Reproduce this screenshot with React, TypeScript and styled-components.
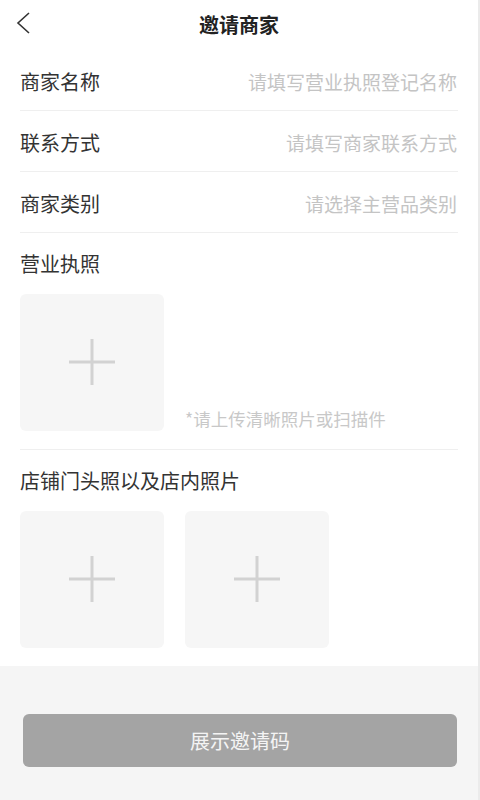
import React from 'react';
import styled, { createGlobalStyle } from 'styled-components';

const GlobalStyle = createGlobalStyle`
    html, body {
        margin: 0;
        padding: 0;
        background: #ffffff;
        font-family: "Noto Sans CJK SC", "Noto Sans", sans-serif;
    }
    * { box-sizing: border-box; }
    svg { display: block; }
`;

const Page = styled.div`
    width: 480px;
    height: 800px;
    display: flex;
    flex-direction: column;
    background: #ffffff;
    border-right: 2px solid #ebebeb;
    overflow: hidden;
`;

const Header = styled.div`
    height: 50px;
    display: flex;
    align-items: center;
    justify-content: center;
    position: relative;
`;

const BackButton = styled.button`
    position: absolute;
    left: 12px;
    top: 9px;
    width: 24px;
    height: 28px;
    padding: 0;
    border: none;
    background: transparent;
    display: flex;
    align-items: center;
    justify-content: center;
`;

const Title = styled.h1`
    margin: 0;
    font-size: 20px;
    font-weight: 700;
    color: #222;
    line-height: 1;
`;

const Form = styled.div`
    padding: 0 20px 0 20px;
`;

const Row = styled.div`
    height: 61px;
    display: flex;
    align-items: center;
    justify-content: space-between;
    border-bottom: 1px solid #efefef;
    padding-top: 3px;
`;

const Label = styled.span`
    font-size: 20px;
    color: #333;
    line-height: 22px;
`;

const Placeholder = styled.span`
    font-size: 19px;
    color: #c4c4c4;
    line-height: 22px;
    margin-right: 1px;
`;

const Section = styled.div<{ last?: boolean }>`
    padding: 20px 0 18px;
    border-bottom: ${p => (p.last ? 'none' : '1px solid #efefef')};
`;

const SectionLabel = styled(Label)`
    display: block;
    margin-bottom: 19px;
`;

const Uploads = styled.div`
    display: flex;
    align-items: flex-end;
    gap: 21px;
`;

const UploadBox = styled.div`
    width: 144px;
    height: 137px;
    border-radius: 6px;
    background: #f6f6f6;
    display: flex;
    align-items: center;
    justify-content: center;
    padding-bottom: 2px;
`;

const Hint = styled.span`
    font-size: 17.5px;
    color: #c8c8c8;
    line-height: 20px;
    margin-bottom: 2px;
`;

const Footer = styled.div`
    flex: 1;
    background: #f5f5f5;
    padding: 48px 21px 0 23px;
`;

const SubmitButton = styled.button`
    width: 100%;
    height: 53px;
    border: none;
    border-radius: 6px;
    background: #a4a4a4;
    color: #f4f4f4;
    font-family: inherit;
    font-size: 20px;
`;

const Plus = () => (
    <svg width="46" height="46" viewBox="0 0 46 46">
        <path d="M0 23H46M23 0V46" stroke="#d2d2d2" strokeWidth="3" />
    </svg>
);

const fields = [
    { label: '商家名称', hint: '请填写营业执照登记名称' },
    { label: '联系方式', hint: '请填写商家联系方式' },
    { label: '商家类别', hint: '请选择主营品类别' },
];

export default function App() {
    return (
        <Page>
            <GlobalStyle />
            <Header>
                <BackButton>
                    <svg width="16" height="24" viewBox="0 0 16 24">
                        <path d="M13 2L2 12L13 22" fill="none" stroke="#333" strokeWidth="1.6" />
                    </svg>
                </BackButton>
                <Title>邀请商家</Title>
            </Header>

            <Form>
                {fields.map(f => (
                    <Row key={f.label}>
                        <Label>{f.label}</Label>
                        <Placeholder>{f.hint}</Placeholder>
                    </Row>
                ))}

                <Section>
                    <SectionLabel>营业执照</SectionLabel>
                    <Uploads>
                        <UploadBox><Plus /></UploadBox>
                        <Hint>*请上传清晰照片或扫描件</Hint>
                    </Uploads>
                </Section>

                <Section last>
                    <SectionLabel>店铺门头照以及店内照片</SectionLabel>
                    <Uploads>
                        <UploadBox><Plus /></UploadBox>
                        <UploadBox><Plus /></UploadBox>
                    </Uploads>
                </Section>
            </Form>

            <Footer>
                <SubmitButton>展示邀请码</SubmitButton>
            </Footer>
        </Page>
    );
}
